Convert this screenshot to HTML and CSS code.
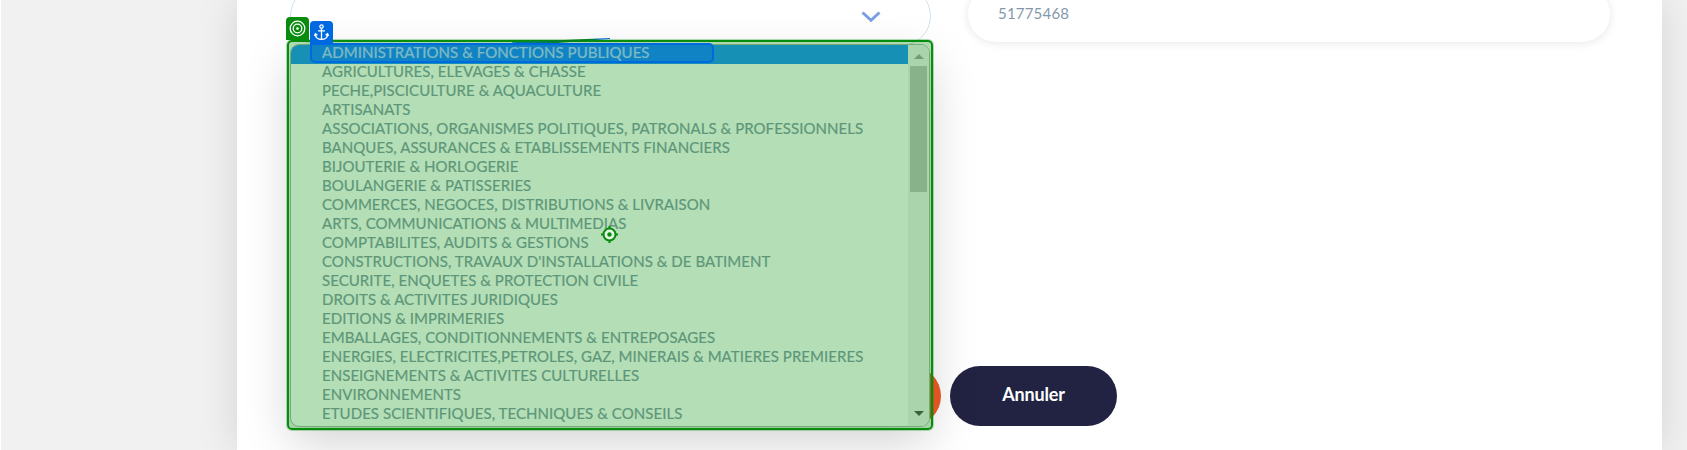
FILE: index.html
```html
<!DOCTYPE html>
<html lang="fr">
<head>
<meta charset="utf-8">
<title>Formulaire</title>
<link rel="stylesheet" href="styles.css">
</head>
<body>
<main class="panel">
  <div class="fields">
    <div class="field field-select">
      <svg class="chevron" width="20" height="12" viewBox="0 0 20 12"><path d="M1.500 1.500l8.500 7.800L18.500 1.500" fill="none" stroke="#7b9fe3" stroke-width="3"/></svg>
    </div>
    <div class="field field-text">51775468</div>
  </div>
  <div class="actions">
    <div class="button save"></div>
    <div class="button cancel">Annuler</div>
  </div>
</main>

<div class="dropdown">
  <ul class="options">
    <li class="selected">ADMINISTRATIONS &amp; FONCTIONS PUBLIQUES</li>
    <li>AGRICULTURES, ELEVAGES &amp; CHASSE</li>
    <li>PECHE,PISCICULTURE &amp; AQUACULTURE</li>
    <li>ARTISANATS</li>
    <li>ASSOCIATIONS, ORGANISMES POLITIQUES, PATRONALS &amp; PROFESSIONNELS</li>
    <li>BANQUES, ASSURANCES &amp; ETABLISSEMENTS FINANCIERS</li>
    <li>BIJOUTERIE &amp; HORLOGERIE</li>
    <li>BOULANGERIE &amp; PATISSERIES</li>
    <li>COMMERCES, NEGOCES, DISTRIBUTIONS &amp; LIVRAISON</li>
    <li>ARTS, COMMUNICATIONS &amp; MULTIMEDIAS</li>
    <li>COMPTABILITES, AUDITS &amp; GESTIONS</li>
    <li>CONSTRUCTIONS, TRAVAUX D'INSTALLATIONS &amp; DE BATIMENT</li>
    <li>SECURITE, ENQUETES &amp; PROTECTION CIVILE</li>
    <li>DROITS &amp; ACTIVITES JURIDIQUES</li>
    <li>EDITIONS &amp; IMPRIMERIES</li>
    <li>EMBALLAGES, CONDITIONNEMENTS &amp; ENTREPOSAGES</li>
    <li>ENERGIES, ELECTRICITES,PETROLES, GAZ, MINERAIS &amp; MATIERES PREMIERES</li>
    <li>ENSEIGNEMENTS &amp; ACTIVITES CULTURELLES</li>
    <li>ENVIRONNEMENTS</li>
    <li>ETUDES SCIENTIFIQUES, TECHNIQUES &amp; CONSEILS</li>
  </ul>
  <div class="scrollbar">
    <svg class="arrow" width="10" height="5" viewBox="0 0 10 5"><path d="M0 5l5-5 5 5z" fill="#a3a3a3"/></svg>
    <div class="thumb"></div>
    <svg class="arrow arrow-down" width="10" height="5" viewBox="0 0 10 5"><path d="M0 0l5 5 5-5z" fill="#505050"/></svg>
  </div>
</div>

<div class="target-box"></div>
<div class="badge target-badge">
  <svg width="17" height="17" viewBox="0 0 17 17" fill="none" stroke="#fff" stroke-width="1.300"><circle cx="8.500" cy="8.500" r="7.300"/><circle cx="8.500" cy="8.500" r="4.300"/><circle cx="8.500" cy="8.500" r="1.300" fill="#fff" stroke="none"/></svg>
</div>
<svg class="link" width="98" height="7" viewBox="0 0 98 7">
  <defs><linearGradient id="wedge"><stop offset="0" stop-color="#0878a0"/><stop offset=".55" stop-color="#058018"/><stop offset=".78" stop-color="#058018"/><stop offset=".92" stop-color="#0670c8"/><stop offset="1" stop-color="#0066e0"/></linearGradient></defs>
  <path d="M0 4.200L98 0v1L45 5 0 5.600z" fill="url(#wedge)"/>
</svg>
<div class="anchor-box"></div>
<div class="badge anchor-badge">
  <svg width="15" height="17" viewBox="0 0 15 17" fill="none" stroke="#fff" stroke-width="1.300"><circle cx="7.500" cy="2.600" r="1.700"/><path d="M7.500 4.300v11.200M4 6.800h7M1.300 10.200c.3 3.300 2.700 5.200 6.200 5.200s5.900-1.900 6.200-5.200M.4 12l1-2.200 2 1.300M14.600 12l-1-2.200-2 1.300"/></svg>
</div>
<svg class="marker" width="17" height="17" viewBox="0 0 17 17"><circle cx="8.500" cy="8.500" r="6" fill="#e4f4e4" stroke="#078c0d" stroke-width="2"/><path d="M8.500 0v3M8.500 14v3M0 8.500h3M14 8.500h3" stroke="#078c0d" stroke-width="2"/><circle cx="8.500" cy="8.500" r="2.200" fill="#078c0d"/></svg>
</body>
</html>
```
FILE: styles.css
```css
* { box-sizing: border-box; }
body {
  margin: 0;
  height: 450px;
  overflow: hidden;
  background: #f1f1f1;
  border-left: 1px solid #fff;
  font-family: Lato, sans-serif;
  font-size: 15px;
  color: #8598ab;
}
.panel {
  width: 1425px;
  height: 450px;
  margin-left: 236px;
  padding: 0 51px 24px 53px;
  background: #fff;
  box-shadow: 0 0 40px rgba(0, 0, 0, .12);
  display: flex;
  flex-direction: column;
  justify-content: space-between;
}
.fields {
  display: flex;
  gap: 37px;
  align-items: flex-start;
  margin-top: -14px;
}
.field {
  height: 60px;
  border-radius: 30px;
  display: flex;
  align-items: center;
}
.field-select {
  width: 641px;
  border: 1px solid #cde4f2;
  justify-content: flex-end;
  padding: 2px 49px 0 0;
}
.field-text {
  width: 642px;
  height: 56px;
  padding: 0 0 2px 30px;
  letter-spacing: .2px;
  box-shadow: 0 1px 10px rgba(0, 0, 0, .1);
}
.actions { display: flex; gap: 9px; padding-left: 484px; }
.button {
  width: 167px;
  height: 60px;
  border-radius: 30px;
  display: flex;
  align-items: center;
  justify-content: center;
  font-size: 18px;
  font-weight: 700;
  letter-spacing: -.15px;
  color: #fff;
}
.save { background: #f05a28; }
.cancel { background: #222342; padding-bottom: 4px; }
.dropdown {
  position: absolute;
  left: 290px;
  top: 44px;
  width: 640px;
  height: 383px;
  border: 1px solid #a9b4a9;
  border-radius: 9px;
  overflow: hidden;
  background: #fff;
  display: flex;
  box-shadow: 0 16px 48px rgba(0, 0, 0, .176);
}
.options {
  flex: 1;
  margin: 0;
  padding: 0;
  list-style: none;
}
.options li {
  height: 19px;
  line-height: 15px;
  padding-left: 31px;
  white-space: nowrap;
  letter-spacing: .05px;
  -webkit-text-stroke: .2px currentColor;
}
.options .selected { background: #1e90ff; color: #fff; }
.scrollbar {
  width: 21px;
  padding: 9px 2px 10px;
  background: #f1f1f1;
  display: flex;
  flex-direction: column;
  align-items: center;
}
.thumb { width: 17px; height: 126px; margin-top: 7px; background: #c1c1c1; }
.arrow-down { margin-top: auto; }
.target-box {
  position: absolute;
  left: 287px;
  top: 40px;
  width: 646px;
  height: 390px;
  border: 2px solid #078c0d;
  border-radius: 5px;
  background: rgba(5, 145, 10, .3);
  box-shadow: 0 0 0 1px rgba(5, 145, 10, .3);
}
.badge {
  position: absolute;
  display: flex;
  align-items: center;
  justify-content: center;
  border-radius: 4px 4px 0 0;
}
.target-badge { left: 286px; top: 17px; width: 23px; height: 23px; background: #078c0d; }
.anchor-badge { left: 310px; top: 21px; width: 23px; height: 23px; background: #0069e0; }
.anchor-box {
  position: absolute;
  left: 310px;
  top: 43px;
  width: 404px;
  height: 20px;
  border: 2px solid #0069e0;
  border-radius: 0 5px 5px 5px;
  background: rgba(0, 102, 230, .3);
}
.link { position: absolute; left: 512px; top: 38px; }
.marker { position: absolute; left: 601px; top: 226px; }
```
